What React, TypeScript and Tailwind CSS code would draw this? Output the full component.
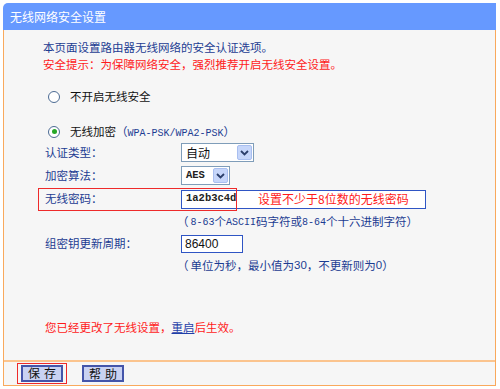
import React from 'react';

const blue = 'text-[#1c3c92]';

function Chevron() {
  return (
    <svg width="9" height="6" viewBox="0 0 9 6">
      <path d="M1 1 L4.5 4.5 L8 1" fill="none" stroke="#2b3f6b" strokeWidth="1.8" />
    </svg>
  );
}

function Select({ value, width, mono }: { value: string; width: string; mono?: boolean }) {
  return (
    <div className={`${width} h-[19px] flex items-center justify-between bg-white border border-[#7f9db9] pl-[4px] pr-[1px]`}>
      <span className={mono ? "font-['Liberation_Mono',monospace] text-[10.5px] font-bold text-[#222]" : 'text-[12px] text-[#111]'}>
        {value}
      </span>
      <span className="w-[15px] h-[15px] flex items-center justify-center bg-[#c6d6fa] border border-[#a9bff0] rounded-[2px]">
        <Chevron />
      </span>
    </div>
  );
}

function Radio({ checked }: { checked?: boolean }) {
  return (
    <span className="w-[12px] h-[12px] rounded-full border border-[#4c6b93] bg-white flex items-center justify-center">
      {checked && <span className="w-[5px] h-[5px] rounded-full bg-[#27a827]" />}
    </span>
  );
}

function Row({ label, children, className = '' }: { label: string; children: React.ReactNode; className?: string }) {
  return (
    <div className={`flex items-center ${className}`}>
      <span className={`w-[138px] pl-[2px] ${blue}`}>{label}</span>
      {children}
    </div>
  );
}

function Button({ label }: { label: string }) {
  return (
    <button
      type="button"
      className="w-[42px] h-[17px] bg-[#c9d2f2] border-2 border-[#4455aa] text-[12px] leading-none text-[#111] tracking-[4px] pl-[4px]"
    >
      {label}
    </button>
  );
}

export default function App() {
  return (
    <div className="w-[500px] h-[389px] bg-white pt-[3px] pl-[3px] font-['Noto_Sans_CJK_SC',sans-serif] text-[11.5px]">
      <div className="w-[493px]">
        <div className="h-[27px] bg-[#6699ff] rounded-tl-[5px] flex items-center pl-[7px] text-[12px] text-white">
          无线网络安全设置
        </div>
        <div className="h-[356px] bg-[#f6f6f6] border-x border-b border-[#f9a95c] flex flex-col">
          <div className="h-[330px] pl-[39px] pt-[9px]">
            <p className={`leading-[17px] ${blue}`}>本页面设置路由器无线网络的安全认证选项。</p>
            <p className="leading-[17px] text-[#ff1a1a]">安全提示：为保障网络安全，强烈推荐开启无线安全设置。</p>

            <div className="mt-[15px] h-[17px] flex items-center pl-[5px] gap-[10px]">
              <Radio />
              <span className="text-[#111]">不开启无线安全</span>
            </div>
            <div className="mt-[18px] h-[17px] flex items-center pl-[5px] gap-[10px]">
              <Radio checked />
              <span className="text-[#111]">
                无线加密
                <span className={blue}>（</span>
                <span className={`font-['Liberation_Mono',monospace] text-[10px] ${blue}`}>WPA-PSK/WPA2-PSK</span>
                <span className={blue}>）</span>
              </span>
            </div>

            <Row label="认证类型：" className="mt-[1px] h-[23px]">
              <Select value="自动" width="w-[73px]" />
            </Row>
            <Row label="加密算法：" className="h-[23px]">
              <Select value="AES" width="w-[49px]" mono />
            </Row>
            <Row label="无线密码：" className="relative h-[24px]">
              <div className="w-[245px] h-[19px] flex items-center bg-white border border-[#2f55c4] pl-[4px]">
                <span className="font-['Liberation_Mono',monospace] text-[10.5px] font-bold text-[#222] w-[72px]">1a2b3c4d</span>
                <span className="text-[12px] text-[#ff1a1a]">设置不少于8位数的无线密码</span>
              </div>
              <span className="absolute left-[-5px] top-[1px] w-[199px] h-[23px] border border-[#ee2a2a]" />
            </Row>
            <div className={`h-[22px] flex items-center pl-[134px] ${blue}`}>
              （<span className="ml-[2px] font-['Liberation_Mono',monospace] text-[10px]">8-63</span>个
              <span className="font-['Liberation_Mono',monospace] text-[10px]">ASCII</span>码字符或
              <span className="font-['Liberation_Mono',monospace] text-[10px]">8-64</span>个十六进制字符）
            </div>
            <Row label="组密钥更新周期：" className="h-[22px]">
              <div className="w-[62px] h-[18px] flex items-center bg-white border border-[#2f55c4] pl-[3px] text-[12px] text-[#111] font-['Liberation_Sans',sans-serif]">
                86400
              </div>
            </Row>
            <div className={`h-[22px] flex items-center pl-[134px] ${blue}`}>
              （<span className="ml-[2px]">单位为秒，最小值为</span>
              <span className="font-['Liberation_Sans',sans-serif]">30</span>，不更新则为
              <span className="font-['Liberation_Sans',sans-serif]">0</span>）
            </div>

            <p className="mt-[42px] pl-[2px] leading-[17px] text-[#ff1a1a]">
              您已经更改了无线设置，
              <span className="text-[#1f3fa8] underline">重启</span>
              后生效。
            </p>
          </div>
          <div className="h-[2px] bg-[#fbc48e]" />
          <div className="flex-1 flex items-center pl-[13px] gap-[15px]">
            <div className="border border-[#ee2a2a] px-[3px] py-[1px]">
              <Button label="保存" />
            </div>
            <Button label="帮助" />
          </div>
        </div>
      </div>
    </div>
  );
}
